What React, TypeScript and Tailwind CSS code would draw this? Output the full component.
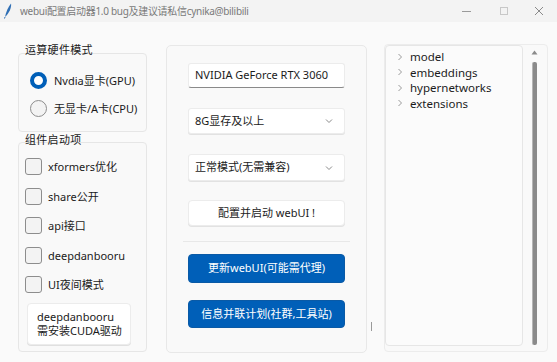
import React from "react";

const font = { fontFamily: '"Noto Sans", "Noto Sans CJK SC", sans-serif' };

function Chevron() {
  return (
    <svg width="10" height="10" viewBox="0 0 10 10" className="text-[#8a8a8a]">
      <path d="M2 3.5 L5 6.5 L8 3.5" fill="none" stroke="currentColor" strokeWidth="1" />
    </svg>
  );
}

function TreeChevron() {
  return (
    <svg width="8" height="10" viewBox="0 0 8 10" className="text-[#9a9a9a]">
      <path d="M2.5 2 L5.5 5 L2.5 8" fill="none" stroke="currentColor" strokeWidth="1" />
    </svg>
  );
}

function Checkbox({ label }: { label: string }) {
  return (
    <div className="flex items-center gap-[6px] h-[17px]">
      <div className="w-[17px] h-[17px] rounded-[3px] border border-[#8d8d8d] bg-[#f3f3f3]" />
      <span className="text-[11px] text-[#1b1b1b] leading-none">{label}</span>
    </div>
  );
}

export default function App() {
  return (
    <div className="w-[557px] h-[362px] bg-[#fafafa] overflow-hidden flex flex-col" style={font}>
      {/* Title bar */}
      <div className="h-[22px] bg-[#f3f3f3] flex items-center shrink-0">
        <svg width="20" height="22" viewBox="0 0 20 22" className="shrink-0">
          <path d="M5 17 C6 12 8 7 11 3.5 C11.5 6 10.5 11 6.5 15.5 Z" fill="#2f6fb5" />
          <path d="M5 17 L4.5 18.5" stroke="#2f6fb5" strokeWidth="1" />
        </svg>
        <span className="text-[10px] text-[#7a7a7a] tracking-[-0.3px] whitespace-nowrap">
          webui配置启动器1.0 bug及建议请私信cynika@bilibili
        </span>
        <div className="ml-auto flex items-center h-full">
          <div className="w-[38px] flex justify-center">
            <div className="w-[9px] h-px bg-[#9a9a9a]" />
          </div>
          <div className="w-[38px] flex justify-center">
            <div className="w-[8px] h-[8px] border border-[#c8c8c8]" />
          </div>
          <div className="w-[34px] flex justify-center pr-[2px]">
            <svg width="10" height="10" viewBox="0 0 10 10">
              <path d="M1 1 L9 9 M9 1 L1 9" stroke="#8a8a8a" strokeWidth="1" />
            </svg>
          </div>
        </div>
      </div>

      {/* Body */}
      <div className="flex items-start">
        {/* Left column */}
        <div className="ml-[18px] w-[129px] mt-[21px] flex flex-col">
          <div className="pl-[7px] text-[11px] leading-[14px] text-[#1b1b1b] mb-[-4px] relative z-10 tracking-[0.3px]">
            运算硬件模式
          </div>
          <div className="h-[79px] rounded-[4px] border border-[#e6e6e6] bg-[#f9f9f9] pl-[11px] pt-[18px] flex flex-col gap-[11px]">
            <div className="flex items-center gap-[7px] h-[17px]">
              <div className="w-[17px] h-[17px] rounded-full border-[4.5px] border-[#005fb8] bg-white" />
              <span className="text-[11px] text-[#1b1b1b] leading-none">Nvdia显卡(GPU)</span>
            </div>
            <div className="flex items-center gap-[7px] h-[17px]">
              <div className="w-[17px] h-[17px] rounded-full border border-[#8d8d8d] bg-[#f3f3f3]" />
              <span className="text-[11px] text-[#1b1b1b] leading-none">无显卡/A卡(CPU)</span>
            </div>
          </div>
          <div className="pl-[7px] mt-[1px] text-[11px] leading-[14px] text-[#1b1b1b] mb-[-5px] relative z-10 tracking-[0.3px]">
            组件启动项
          </div>
          <div className="h-[210px] rounded-[4px] border border-[#e6e6e6] bg-[#f9f9f9] pl-[6px] pt-[15px] flex flex-col">
            <div className="flex flex-col gap-[12.5px]">
              <Checkbox label="xformers优化" />
              <Checkbox label="share公开" />
              <Checkbox label="api接口" />
              <Checkbox label="deepdanbooru" />
              <Checkbox label="UI夜间模式" />
            </div>
            <div className="mt-[10px] ml-[2px] w-[104px] h-[42px] rounded-[4px] bg-white border border-[#ececec] shadow-[0_1px_0_#e0e0e0] pl-[9px] flex flex-col justify-center text-[11px] leading-[14px] text-[#1b1b1b]">
              <span>deepdanbooru</span>
              <span>需安装CUDA驱动</span>
            </div>
          </div>
        </div>

        {/* Middle column */}
        <div className="ml-[19px] mt-[23px] w-[201px] h-[308px] rounded-[5px] border border-[#e8e8e8] bg-[#f9f9f9] pl-[21px] pt-[17px] relative">
          <div className="w-[157px] flex flex-col">
            <div className="h-[25px] bg-white rounded-[3px] border border-[#ececec] border-b-[#8a8a8a] flex items-center pl-[6px] text-[11px] text-[#1b1b1b] whitespace-nowrap">
              NVIDIA GeForce RTX 3060
            </div>
            <div className="mt-[20px] h-[26px] bg-white rounded-[3px] border border-[#ececec] shadow-[0_1px_0_#e2e2e2] flex items-center pl-[6px] pr-[10px] text-[11px] text-[#1b1b1b]">
              <span>8G显存及以上</span>
              <span className="ml-auto"><Chevron /></span>
            </div>
            <div className="mt-[20px] h-[27px] bg-white rounded-[3px] border border-[#ececec] shadow-[0_1px_0_#e2e2e2] flex items-center pl-[6px] pr-[10px] text-[11px] text-[#1b1b1b]">
              <span>正常模式(无需兼容)</span>
              <span className="ml-auto"><Chevron /></span>
            </div>
            <div className="mt-[19px] h-[26px] bg-white rounded-[4px] border border-[#ececec] shadow-[0_1px_0_#e2e2e2] flex items-center justify-center text-[11px] text-[#1b1b1b]">
              配置并启动 webUI !
            </div>
            <div className="mt-[15px] -mx-[5px] h-px bg-[#e8e8e8]" />
            <div className="mt-[12px] h-[29px] bg-[#005fb8] rounded-[4px] border border-[#0a5aa6] flex items-center justify-center text-[11px] text-white">
              更新webUI(可能需代理)
            </div>
            <div className="mt-[17px] h-[28px] bg-[#005fb8] rounded-[4px] border border-[#0a5aa6] flex items-center justify-center text-[11px] text-white">
              信息并联计划(社群,工具站)
            </div>
          </div>
          <div className="absolute right-[-6px] top-[276px] w-px h-[9px] bg-[#9a9a9a]" />
        </div>

        {/* Right column */}
        <div className="ml-[17px] mt-[22px] w-[164px] h-[308px] rounded-[4px] border border-[#ececec] bg-[#f9f9f9] flex">
          <div className="w-[138px] h-[301px] bg-[#fbfbfb] rounded-[4px] border border-[#e6e6e6] pl-[10px] pt-[3px] flex flex-col text-[11.5px] text-[#1b1b1b] leading-[15.5px]">
            {["model", "embeddings", "hypernetworks", "extensions"].map((t) => (
              <div key={t} className="flex items-center gap-[6px]">
                <TreeChevron />
                <span>{t}</span>
              </div>
            ))}
          </div>
          <div className="ml-[7px] w-[8px] flex flex-col items-center pt-[5px]">
            <svg width="7" height="5" viewBox="0 0 7 5">
              <path d="M0.5 4.5 L3.5 0.5 L6.5 4.5 Z" fill="#8a8a8a" />
            </svg>
            <div className="mt-[7px] w-[5px] h-[283px] rounded-[2px] bg-[#8a8a8a] border-l border-[#b5b5b5]" />
          </div>
        </div>
      </div>
    </div>
  );
}
